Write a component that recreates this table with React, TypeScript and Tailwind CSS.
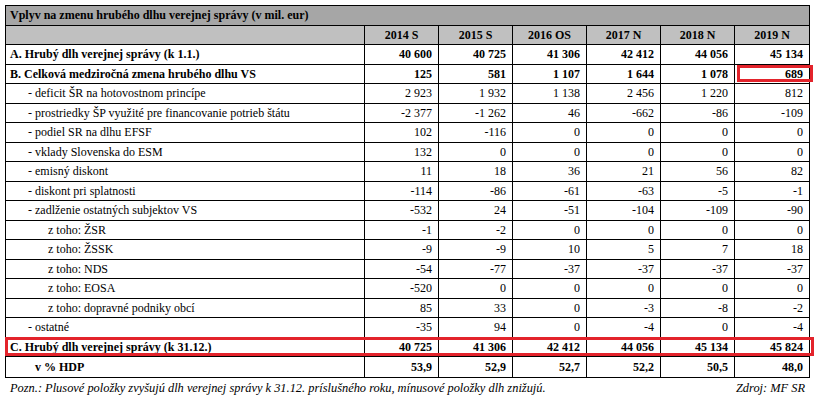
import React from "react";

type Row = {
  label: string;
  values: string[];
  bold?: boolean;
  indent: "a" | "b" | "c" | "d";
  highlightRow?: boolean;
  highlightLast?: boolean;
};

const rows: Row[] = [
  { label: "A. Hrubý dlh verejnej správy (k 1.1.)", values: ["40 600", "40 725", "41 306", "42 412", "44 056", "45 134"], bold: true, indent: "a" },
  { label: "B. Celková medziročná zmena hrubého dlhu VS", values: ["125", "581", "1 107", "1 644", "1 078", "689"], bold: true, indent: "a", highlightLast: true },
  { label: "- deficit ŠR na hotovostnom princípe", values: ["2 923", "1 932", "1 138", "2 456", "1 220", "812"], indent: "b" },
  { label: "- prostriedky ŠP využité pre financovanie potrieb štátu", values: ["-2 377", "-1 262", "46", "-662", "-86", "-109"], indent: "b" },
  { label: "- podiel SR na dlhu EFSF", values: ["102", "-116", "0", "0", "0", "0"], indent: "b" },
  { label: "- vklady Slovenska do ESM", values: ["132", "0", "0", "0", "0", "0"], indent: "b" },
  { label: "- emisný diskont", values: ["11", "18", "36", "21", "56", "82"], indent: "b" },
  { label: "- diskont pri splatnosti", values: ["-114", "-86", "-61", "-63", "-5", "-1"], indent: "b" },
  { label: "- zadlženie ostatných subjektov VS", values: ["-532", "24", "-51", "-104", "-109", "-90"], indent: "b" },
  { label: "z toho: ŽSR", values: ["-1", "-2", "0", "0", "0", "0"], indent: "c" },
  { label: "z toho: ŽSSK", values: ["-9", "-9", "10", "5", "7", "18"], indent: "c" },
  { label: "z toho: NDS", values: ["-54", "-77", "-37", "-37", "-37", "-37"], indent: "c" },
  { label: "z toho: EOSA", values: ["-520", "0", "0", "0", "0", "0"], indent: "c" },
  { label: "z toho: dopravné podniky obcí", values: ["85", "33", "0", "-3", "-8", "-2"], indent: "c" },
  { label: "- ostatné", values: ["-35", "94", "0", "-4", "0", "-4"], indent: "b" },
  { label: "C. Hrubý dlh verejnej správy (k 31.12.)", values: ["40 725", "41 306", "42 412", "44 056", "45 134", "45 824"], bold: true, indent: "a", highlightRow: true },
  { label: "v % HDP", values: ["53,9", "52,9", "52,7", "52,2", "50,5", "48,0"], bold: true, indent: "d" },
];

const years = ["2014 S", "2015 S", "2016 OS", "2017 N", "2018 N", "2019 N"];

const indentClass: Record<Row["indent"], string> = {
  a: "pl-[4px]",
  b: "pl-[22px]",
  c: "pl-[42px]",
  d: "pl-[29px]",
};

export default function App() {
  return (
    <div className="font-['Liberation_Serif',serif] w-[815px] h-[400px] bg-white pl-[5px] pt-[5px] text-[12px] leading-none text-black">
      <div className="w-[805px] border border-black">
        <div className="h-[19.5px] bg-[#a6a6a6] border-b border-black flex items-center pl-[4px] font-bold">
          Vplyv na zmenu hrubého dlhu verejnej správy (v mil. eur)
        </div>
        <div className="h-[19.5px] bg-[#c0c0c0] border-b border-black flex font-bold">
          <div className="w-[359px] border-r border-black" />
          {years.map((y, i) => (
            <div
              key={y}
              className={
                "w-[74px] flex items-center justify-center " + (i < 5 ? "border-r border-black" : "")
              }
            >
              {y}
            </div>
          ))}
        </div>
        {rows.map((r, ri) => (
          <div
            key={ri}
            className={
              "relative h-[19.5px] flex " +
              (ri < rows.length - 1 ? "border-b border-black " : "") +
              (r.bold ? "font-bold" : "")
            }
          >
            <div className={"w-[359px] border-r border-black flex items-center " + indentClass[r.indent]}>
              {r.label}
            </div>
            {r.values.map((v, i) => (
              <div
                key={i}
                className={
                  "relative w-[74px] flex items-center justify-end pr-[6px] " +
                  (i < 5 ? "border-r border-black" : "")
                }
              >
                {v}
                {r.highlightLast && i === 5 && (
                  <div className="absolute left-[2px] right-[-4px] top-[0.5px] bottom-[1px] border-[3px] border-[#e3232b]" />
                )}
              </div>
            ))}
            {r.highlightRow && (
              <div className="absolute left-[-1px] right-[-5px] top-[-1px] bottom-[0px] border-[3px] border-[#e3232b]" />
            )}
          </div>
        ))}
      </div>
      <div className="w-[800px] flex justify-between pl-[5px] pt-[4px] italic text-[12.4px]">
        <span>Pozn.: Plusové položky zvyšujú dlh verejnej správy k 31.12. príslušného roku, mínusové položky dlh znižujú.</span>
        <span>Zdroj: MF SR</span>
      </div>
    </div>
  );
}
